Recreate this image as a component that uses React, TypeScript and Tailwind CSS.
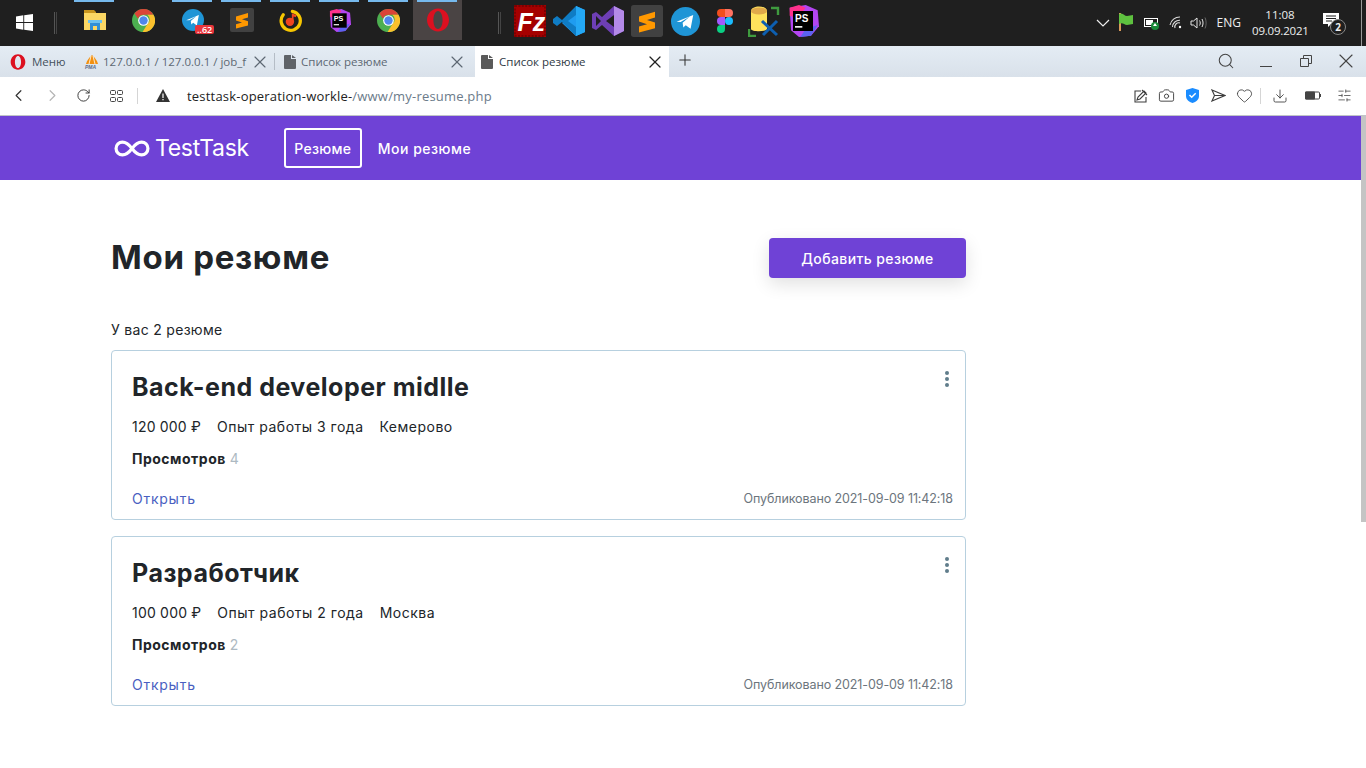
import { Camera, ChevronLeft, ChevronRight, Download, Heart, RotateCw, Search, SlidersHorizontal, X, Plus } from "lucide-react";
import type { ReactNode } from "react";

const uiFont = "font-['Inter','Liberation_Sans',sans-serif]";
const sysFont = "font-['Open_Sans','Noto_Sans',sans-serif]";

function WindowsLogo() {
  return (
    <svg width="17" height="17" viewBox="0 0 17 17" fill="#fff">
      <path d="M0 2.4 7.3 1.3V8H0zM8.2 1.2 17 0v8H8.2zM0 9h7.3v6.7L0 14.6zM8.2 9H17v8l-8.8-1.2z" />
    </svg>
  );
}

function Explorer() {
  return (
    <svg width="24" height="22" viewBox="0 0 24 22">
      <path d="M1 1h10l2 2v3H1z" fill="#c9961f" />
      <path d="M1 4h22v17H1z" fill="#fbd764" />
      <path d="M7 14h10v7h-3v-4h-4v4H7z" fill="#2f8fd8" />
      <path d="M5 11h14v3H5z" fill="#6cc1f0" />
    </svg>
  );
}

function Chrome({ size = 23 }: { size?: number }) {
  return (
    <svg width={size} height={size} viewBox="0 0 24 24">
      <circle cx="12" cy="12" r="12" fill="#4caf50" />
      <path d="M12 0a12 12 0 0 1 10.4 6H12a6 6 0 0 0-5.7 4.2L2.6 4.6A12 12 0 0 1 12 0z" fill="#db4437" />
      <path d="M22.4 6A12 12 0 0 1 11 24l5.3-8.5A6 6 0 0 0 16 6z" fill="#fbc02d" />
      <circle cx="12" cy="12" r="5.6" fill="#fff" />
      <circle cx="12" cy="12" r="4.4" fill="#4f86ec" />
    </svg>
  );
}

function Telegram({ size = 22 }: { size?: number }) {
  return (
    <svg width={size} height={size} viewBox="0 0 24 24">
      <circle cx="12" cy="12" r="12" fill="#1f95d6" />
      <path d="M4.6 12.2 18.4 6.6 16.2 18l-4-3-2 2-.6-4 6-5.2-7.6 4.6z" fill="#fff" />
    </svg>
  );
}

function Sublime({ size = 24 }: { size?: number }) {
  return (
    <svg width={size} height={size} viewBox="0 0 24 24">
      <rect width="24" height="24" rx="2" fill="#414141" />
      <path d="M6 8.6 18 5v4.4l-6 1.8 6 2v4.2L6 20.600v-4.400l6-1.800-6-2z" fill="#ff9800" />
    </svg>
  );
}

function MusicRing() {
  return (
    <svg width="23" height="23" viewBox="0 0 24 24">
      <path d="M14 2.4A10 10 0 1 1 4.4 6" fill="none" stroke="#f7c600" strokeWidth="3.4" strokeLinecap="round" />
      <circle cx="11.4" cy="13.4" r="4.4" fill="#f0441f" />
      <path d="M13.4 13V4.4l4.4 1.8v2.4l-2.6-.9V13z" fill="#f0441f" />
    </svg>
  );
}

function PhpStorm({ size = 23 }: { size?: number }) {
  return (
    <svg width={size} height={size} viewBox="0 0 24 24">
      <path d="M2 2 14 0l9 4 1 12-6 7-9 1-6-5z" fill="#b345f1" />
      <path d="M2 2l7-2 5 2-6 8-6-2z" fill="#ff318c" />
      <path d="M18 23l-8 1 4-6 9-3z" fill="#5a63f0" />
      <rect x="4.5" y="4.5" width="15" height="15" fill="#000" />
      <text x="6" y="12.5" fontSize="7.5" fontWeight="700" fill="#fff" fontFamily="Liberation Sans, sans-serif">PS</text>
      <rect x="6" y="15.8" width="5.5" height="1.2" fill="#fff" />
    </svg>
  );
}

function Opera({ size = 24 }: { size?: number }) {
  return (
    <svg width={size} height={size} viewBox="0 0 24 24">
      <path
        fillRule="evenodd"
        d="M12 .5C18 .5 23 5.500 23 12s-5 11.500-11 11.500S1 18.500 1 12 6 .5 12 .5zm0 2.500c-2.700 0-4.600 4-4.600 9s1.900 9 4.600 9 4.600-4 4.600-9-1.900-9-4.600-9z"
        fill="#dc1020"
      />
    </svg>
  );
}

function FileZilla() {
  return (
    <svg width="32" height="32" viewBox="0 0 32 32">
      <rect width="32" height="32" fill="#a50000" />
      <rect x="1" y="1" width="30" height="30" fill="none" stroke="#7c0000" strokeWidth="2" strokeDasharray="2 1.4" />
      <text x="3.5" y="26" fontSize="25" fontWeight="700" fontStyle="italic" fill="#fff" fontFamily="Liberation Sans, sans-serif">Fz</text>
    </svg>
  );
}

function VsCode() {
  return (
    <svg width="32" height="32" viewBox="0 0 32 32">
      <path d="M23 1 32 5v22l-9 4-14-13 14-10z" fill="#1f9cf0" />
      <path d="M23 1 9 15l-5-4-4 3v4l4 3 5-4 14 14V22l-8-6 8-6z" fill="#0f7cc4" />
      <path d="M23 1v30l9-4V5z" fill="#24a8f5" />
    </svg>
  );
}

function VisualStudio() {
  return (
    <svg width="32" height="32" viewBox="0 0 32 32">
      <path d="M22 1 32 6v20l-10 5-12-11-6 5-4-2V9l4-2 6 5z" fill="#6e3fb5" />
      <path d="M22 1 32 6v20l-10 5z" fill="#b48ae8" />
      <path d="M4 11v10l5-5zM22 10l-8 6 8 6z" fill="#1f1f1f" />
    </svg>
  );
}

function Figma() {
  return (
    <svg width="16" height="24" viewBox="0 0 16 24">
      <path d="M4 0h4v8H4a4 4 0 0 1 0-8z" fill="#f24e1e" />
      <path d="M8 0h4a4 4 0 0 1 0 8H8z" fill="#ff7262" />
      <path d="M4 8h4v8H4a4 4 0 0 1 0-8z" fill="#a259ff" />
      <circle cx="12" cy="12" r="4" fill="#1abcfe" />
      <path d="M4 16h4v4a4 4 0 1 1-4-4z" fill="#0acf83" />
    </svg>
  );
}

function DbTool() {
  return (
    <svg width="32" height="32" viewBox="0 0 32 32">
      <path d="M3 6c0-6 16-6 16 0v18c0 3-16 3-16 0z" fill="#ffe25c" />
      <ellipse cx="11" cy="6" rx="8" ry="3.6" fill="#e0a94a" />
      <path d="M23 3h7v7M1 24v7h7" fill="none" stroke="#3f9b3f" strokeWidth="2.4" />
      <path d="M14 16l15 14M29 16 15 30" stroke="#0d5fb0" strokeWidth="3" />
    </svg>
  );
}

type TaskItem = { id: string; icon: ReactNode; open?: boolean; active?: boolean; badge?: string };

const pinned: TaskItem[] = [
  { id: "explorer", icon: <Explorer />, open: true },
  { id: "chrome", icon: <Chrome /> },
  { id: "telegram", icon: <Telegram />, open: true, badge: "..62" },
  { id: "sublime", icon: <Sublime />, open: true },
  { id: "music", icon: <MusicRing />, open: true },
  { id: "phpstorm", icon: <PhpStorm />, open: true },
  { id: "chrome2", icon: <Chrome />, open: true },
  { id: "opera", icon: <Opera />, open: true, active: true },
];

const quick = [
  <FileZilla />,
  <VsCode />,
  <VisualStudio />,
  <Sublime size={32} />,
  <Telegram size={29} />,
  <Figma />,
  <DbTool />,
  <PhpStorm size={32} />,
];

function Divider() {
  return (
    <div className="flex h-[22px] w-[3px] justify-between">
      <span className="w-px bg-[#555]" />
      <span className="w-px bg-[#444]" />
    </div>
  );
}

function Taskbar() {
  return (
    <div className={`flex h-[46px] shrink-0 items-start bg-[#1f1f1f] text-white ${sysFont}`}>
      <div className="flex h-[46px] w-[54px] items-center pl-[16px] pb-[1px]">
        <WindowsLogo />
      </div>
      <div className="mt-[12px]">
        <Divider />
      </div>
      <div className="ml-[13px] flex">
        {pinned.map((t) => (
          <div
            key={t.id}
            className={`relative flex h-[40px] w-[49px] items-center justify-center ${t.active ? "bg-[#4a4444]" : ""}`}
          >
            {t.open && <span className="absolute top-0 left-[4px] h-[2px] w-[40px] bg-[#76b9ed]" />}
            {t.icon}
            {t.badge && (
              <span className="absolute top-[25px] left-[27px] rounded-[2px] bg-[#e8353b] px-[2px] text-[9px] leading-[9px] font-semibold text-white">
                {t.badge}
              </span>
            )}
          </div>
        ))}
      </div>
      <div className="mt-[12px] ml-[36px]">
        <Divider />
      </div>
      <div className="ml-[9px] flex h-[40px]">
        {quick.map((icon, i) => (
          <div key={i} className="flex h-[42px] w-[39px] items-center justify-center">
            {icon}
          </div>
        ))}
      </div>
      <div className="ml-auto flex h-[46px] items-center pr-[4px]">
        <svg width="14" height="8" viewBox="0 0 14 8" fill="none" stroke="#eee" strokeWidth="1.2">
          <path d="M1 1l6 6 6-6" />
        </svg>
        <svg className="mb-[2px] ml-[8px]" width="16" height="18" viewBox="0 0 16 18">
          <path d="M1 0h2v18H1z" fill="#d99a5b" />
          <path d="M1 1c4-2 5 2 8 2l6-1v9l-6 1c-3 0-4-3-8-1z" fill="#5ec13f" />
        </svg>
        <svg className="ml-[10px]" width="16" height="14" viewBox="0 0 16 14">
          <rect x="0.5" y="2.5" width="13" height="8" fill="none" stroke="#fff" />
          <rect x="2" y="4" width="7" height="5" fill="#fff" />
          <circle cx="11" cy="10" r="4" fill="#1b8a3a" />
          <path d="M11 7l2 3h-4z" fill="#fff" />
        </svg>
        <svg className="ml-[9px]" width="14" height="14" viewBox="0 0 14 14" fill="none" stroke="#ddd" strokeWidth="1.1">
          <path d="M1 9a10 10 0 0 1 10-8M3.5 11A7 7 0 0 1 11 4.2M6 12a4 4 0 0 1 5-5" />
          <circle cx="11" cy="11" r="1.2" fill="#fff" stroke="none" />
        </svg>
        <svg className="ml-[7px]" width="17" height="14" viewBox="0 0 17 14" fill="none" stroke="#e6e6e6" strokeWidth="1">
          <path d="M1 5h2.5L7 2v10L3.5 9H1z" />
          <path d="M9.5 4.5c1 1.5 1 3.500 0 5M12 3c1.400 2.500 1.400 5.500 0 8" />
          <path d="M15 1.500c1.500 3 1.500 8 0 11" stroke="#666" />
        </svg>
        <span className="ml-[10px] text-[12px] leading-none text-[#eee]">ENG</span>
        <div className="ml-[11px] w-[56px] text-center text-[11.5px] leading-[16px] text-[#eee]">
          <div>11:08</div>
          <div className="tracking-[-0.2px]">09.09.2021</div>
        </div>
        <div className="relative mr-[16px] ml-[13px] h-[24px] w-[24px]">
          <svg width="16" height="15" viewBox="0 0 16 15" className="absolute top-[2px] left-[2px]">
            <path d="M0 0h16v11H8l-3 3v-3H0z" fill="#fff" />
            <path d="M3 3h10M3 5.500h10M3 8h6" stroke="#1f1f1f" />
          </svg>
          <span className="absolute top-[8px] left-[9px] flex h-[16px] w-[16px] items-center justify-center rounded-full border border-[#888] bg-[#1f1f1f] text-[10px] font-bold text-[#eee]">
            2
          </span>
        </div>
        <span className="h-[46px] w-px bg-[#999]" />
      </div>
    </div>
  );
}

function DocIcon({ dark }: { dark?: boolean }) {
  return (
    <svg width="12" height="14" viewBox="0 0 12 14" fill={dark ? "#5a5a5a" : "#5f6368"}>
      <path d="M1 0h6v4h5v9a1 1 0 0 1-1 1H1a1 1 0 0 1-1-1V1a1 1 0 0 1 1-1zM8 0l4 3H8z" />
    </svg>
  );
}

function TabStrip() {
  return (
    <div className={`flex h-[31px] shrink-0 bg-gradient-to-b from-[#e4ecf4] to-[#d9e1ea] text-[11.5px] text-[#5d6873] ${sysFont}`}>
      <div className="flex w-[475px] items-center">
        <div className="ml-[10px]">
          <Opera size={16} />
        </div>
        <span className="ml-[6px] w-[50px] text-[#44505c]">Меню</span>
        <svg className="ml-[2px]" width="16" height="14" viewBox="0 0 16 14">
          <path d="M8 0c-3 3-5 5-6 9h12C13 5 11 3 8 0z" fill="#f29111" />
          <path d="M7 1 5 9M9 1l2 8" stroke="#fff" strokeWidth=".8" />
          <text x="1" y="14" fontSize="5" fontWeight="700" fontStyle="italic" fill="#5a6a8a" fontFamily="Liberation Sans, sans-serif">PMA</text>
        </svg>
        <span className="ml-[3px] w-[143px] whitespace-nowrap">127.0.0.1 / 127.0.0.1 / job_f</span>
        <X className="ml-[4px]" size={20} strokeWidth={1.4} />
        <span className="ml-[4px] h-[17px] w-px bg-[#b5bdc6]" />
        <div className="ml-[9px]">
          <DocIcon />
        </div>
        <span className="ml-[5px]">Список резюме</span>
        <X className="mr-[8px] ml-auto" size={20} strokeWidth={1.4} />
      </div>
      <div className="flex w-[194px] items-center bg-white pl-[6px] text-[#2f3a45]">
        <DocIcon dark />
        <span className="ml-[6px]">Список резюме</span>
        <X className="mr-[4px] ml-auto text-[#222]" size={20} strokeWidth={1.5} />
      </div>
      <Plus className="mt-[5px] ml-[7px] text-[#333]" size={18} strokeWidth={1.4} />
      <div className="ml-auto flex items-center pb-[2px] text-[#444]">
        <Search size={18} strokeWidth={1.4} />
        <svg className="ml-[25px]" width="12" height="12" viewBox="0 0 12 12" stroke="currentColor" fill="none">
          <path d="M0 11.500h12" />
        </svg>
        <svg className="ml-[28px]" width="12" height="12" viewBox="0 0 12 12" stroke="currentColor" fill="none">
          <path d="M.5 3.500h8v8h-8zM3.500 3.500v-3h8v8h-3" />
        </svg>
        <X className="mr-[8px] ml-[22px]" size={24} strokeWidth={1.1} />
      </div>
    </div>
  );
}

function AddressBar() {
  return (
    <div className={`flex h-[39px] shrink-0 items-center border-b border-[#c0c4c8] bg-white pb-[1px] text-[#333] ${sysFont}`}>
      <ChevronLeft className="ml-[9px]" size={19} strokeWidth={1.5} />
      <ChevronRight className="ml-[15px] text-[#b5b5b5]" size={19} strokeWidth={1.5} />
      <RotateCw className="ml-[14px]" size={15} strokeWidth={1.5} />
      <svg className="ml-[19px]" width="13" height="12" viewBox="0 0 13 12" fill="none" stroke="#444">
        <rect x=".5" y=".5" width="5" height="4" rx="1" />
        <rect x="7.500" y=".5" width="5" height="4" rx="1" />
        <rect x=".5" y="7.500" width="5" height="4" rx="1" />
        <rect x="7.500" y="7.500" width="5" height="4" rx="1" />
      </svg>
      <span className="ml-[14px] h-[16px] w-px bg-[#d5d5d5]" />
      <svg className="ml-[18px]" width="14" height="13" viewBox="0 0 14 13">
        <path d="M7 0l7 13H0z" fill="#333" />
        <path d="M6.400 4.500h1.200v4.500H6.400zM6.400 10h1.200v1.300H6.400z" fill="#fff" />
      </svg>
      <span className="mt-[2px] ml-[17px] text-[13px] tracking-[0.2px] text-[#222]">
        testtask-operation-workle-<span className="text-[#6b7b8a]">/www/my-resume.php</span>
      </span>
      <div className="ml-auto flex items-center text-[#3d3d3d]">
        <svg width="14" height="14" viewBox="0 0 14 14" fill="none" stroke="currentColor" strokeWidth="1.100">
          <path d="M7 2H1v11h11V8M3 11l3-1 6-6-2-2-6 6z" />
          <path d="M8 1l5 5" />
        </svg>
        <Camera className="ml-[10px]" size={17} strokeWidth={1.300} />
        <svg className="ml-[11px]" width="13" height="15" viewBox="0 0 13 15">
          <path d="M6.500 0 13 2v6c0 3.500-3 6-6.500 7C3 14 0 11.500 0 8V2z" fill="#1a8cff" />
          <path d="M3.500 7l2.200 2.200 4-4" fill="none" stroke="#fff" strokeWidth="1.500" />
        </svg>
        <svg className="ml-[12px]" width="15" height="13" viewBox="0 0 15 13" fill="none" stroke="currentColor" strokeWidth="1.100">
          <path d="M1 1l13 5.500L1 12l2.500-5.500zM3.500 6.500H14" />
        </svg>
        <Heart className="ml-[10px]" size={17} strokeWidth={1.200} />
        <span className="ml-[7px] h-[16px] w-px bg-[#d5d5d5]" />
        <Download className="ml-[11px]" size={16} strokeWidth={1.300} />
        <svg className="ml-[17px]" width="16" height="9" viewBox="0 0 16 9">
          <rect width="10" height="8" y=".5" rx="1" fill="#444" />
          <rect x=".5" y="1" width="14" height="7" rx="1" fill="none" stroke="#444" />
          <rect x="15" y="3" width="1" height="3" fill="#444" />
        </svg>
        <SlidersHorizontal className="mr-[14px] ml-[16px]" size={15} strokeWidth={1.200} />
      </div>
    </div>
  );
}

function SiteHeader() {
  return (
    <header className={`flex h-[64px] items-center bg-[#6f42d6] pl-[114px] text-white ${uiFont}`}>
      <svg width="36" height="17" viewBox="1.5 0 33 16" fill="none" stroke="#fff" strokeWidth="3">
        <path d="M18 8c-3-4-5.500-6-9-6a6 6 0 0 0 0 12c3.500 0 6-2 9-6s5.500-6 9-6a6 6 0 0 1 0 12c-3.500 0-6-2-9-6z" />
      </svg>
      <span className="ml-[5px] text-[23px] font-normal tracking-[-0.3px]">TestTask</span>
      <a className="ml-[35px] flex h-[40px] w-[78px] items-center justify-center rounded-[3px] border-2 border-white text-[14px] font-medium tracking-[0.3px]">
        Резюме
      </a>
      <a className="ml-[16px] text-[14px] font-medium tracking-[0.5px]">Мои резюме</a>
    </header>
  );
}

type Resume = { title: string; salary: string; exp: string; city: string; views: number };

const resumes: Resume[] = [
  { title: "Back-end developer midlle", salary: "120 000 ₽", exp: "Опыт работы 3 года", city: "Кемерово", views: 4 },
  { title: "Разработчик", salary: "100 000 ₽", exp: "Опыт работы 2 года", city: "Москва", views: 2 },
];

function ResumeCard({ r }: { r: Resume }) {
  return (
    <div className="h-[170px] rounded-[4px] border border-[#b7d0df] pt-[20px] pr-[12px] pl-[20px] text-[#212529]">
      <div className="flex items-start justify-between">
        <h2 className="text-[25px] leading-[32px] font-bold tracking-[0.5px]">{r.title}</h2>
        <div className="mr-[4px] flex flex-col gap-[2px]">
          <span className="h-[4px] w-[4px] rounded-full bg-[#607d8b]" />
          <span className="h-[4px] w-[4px] rounded-full bg-[#607d8b]" />
          <span className="h-[4px] w-[4px] rounded-full bg-[#607d8b]" />
        </div>
      </div>
      <div className="mt-[14px] flex gap-[16px] text-[14px] leading-[20px] tracking-[0.5px]">
        <span className="tracking-[0.2px]">{r.salary}</span>
        <span>{r.exp}</span>
        <span>{r.city}</span>
      </div>
      <div className="mt-[12px] text-[14px] leading-[20px]">
        <b className="font-bold tracking-[0.5px]">Просмотров</b> <span className="text-[#adb9c2]">{r.views}</span>
      </div>
      <div className="mt-[20px] flex items-center justify-between leading-[20px]">
        <a className="text-[14px] tracking-[0.75px] text-[#4a5fc1]">Открыть</a>
        <span className="text-[12.5px] tracking-[-0.1px] text-[#6c757d]">Опубликовано 2021-09-09 11:42:18</span>
      </div>
    </div>
  );
}

export default function App() {
  return (
    <div className="flex h-screen flex-col overflow-hidden bg-white">
      <Taskbar />
      <TabStrip />
      <AddressBar />
      <div className="flex flex-1 overflow-hidden">
        <div className="flex-1">
          <SiteHeader />
          <main className={`w-[966px] pl-[111px] text-[#212529] ${uiFont}`}>
            <div className="mt-[58px] flex h-[40px] items-center justify-between">
              <h1 className="text-[33px] font-bold tracking-[0.7px]">Мои резюме</h1>
              <button className="h-[40px] w-[197px] rounded-[4px] bg-[#6f42d6] text-[14px] font-medium tracking-[0.4px] text-white shadow-[0_6px_18px_rgba(0,0,0,0.12)]">
                Добавить резюме
              </button>
            </div>
            <p className="mt-[42px] text-[14px] leading-[20px] tracking-[0.3px]">У вас 2 резюме</p>
            <div className="mt-[10px] flex flex-col gap-[16px]">
              {resumes.map((r) => (
                <ResumeCard key={r.title} r={r} />
              ))}
            </div>
          </main>
        </div>
        <div className="w-[5px] bg-white">
          <div className="h-[406px] w-full bg-[#c4c4c4]" />
        </div>
      </div>
    </div>
  );
}
